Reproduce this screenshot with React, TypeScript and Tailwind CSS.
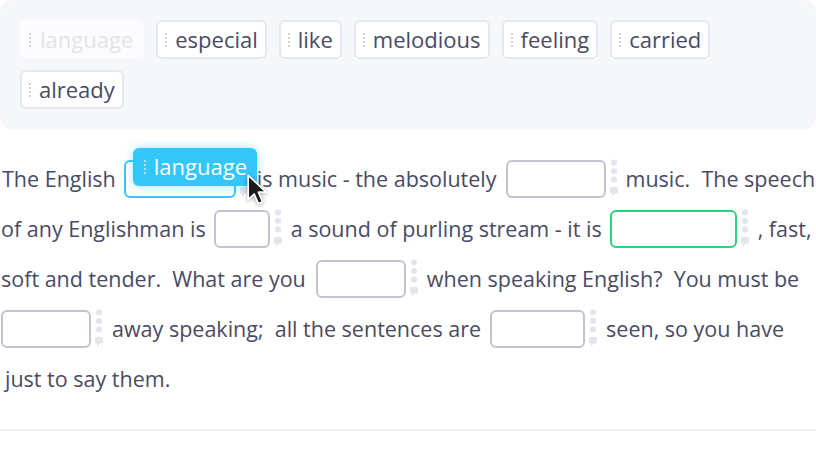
import React from 'react';

const font = { fontFamily: '"Open Sans", "Noto Sans", sans-serif' };

function Handle({ light = false }: { light?: boolean }) {
  return (
    <svg width="4" height="16" viewBox="0 0 4 16" className="shrink-0">
      {[2, 6, 10, 14].map((y) => (
        <circle key={y} cx="2" cy={y} r="1.1" fill={light ? '#ffffff' : '#c6c8d4'} opacity={light ? 0.7 : 1} />
      ))}
    </svg>
  );
}

function Hint() {
  return (
    <svg width="10" height="40" viewBox="0 0 10 40" className="shrink-0">
      <circle cx="5" cy="3.5" r="3" fill="#e3e4ec" />
      <circle cx="5" cy="12" r="3" fill="#e3e4ec" />
      <circle cx="5" cy="20.5" r="3" fill="#e3e4ec" />
      <rect x="1" y="28" width="8" height="6.5" rx="1.5" fill="#e3e4ec" />
      <polygon points="3,34 6,34 3,38" fill="#e3e4ec" />
    </svg>
  );
}

function Chip({ word, faded = false }: { word: string; faded?: boolean }) {
  if (faded) {
    return (
      <div className="flex items-center gap-[8px] h-[39px] pl-[6px] pr-[9px] rounded-md bg-[#fcfcfe] border-2 border-[#fcfcfe] text-[#e2e3eb]">
        <Handle />
        <span className="text-[22px] leading-none pb-[2px]">{word}</span>
      </div>
    );
  }
  return (
    <div className="flex items-center gap-[7px] h-[39px] pl-[6px] pr-[7px] rounded-md bg-white border-2 border-[#e6e8f0] text-[#4a4b63]">
      <Handle />
      <span className="text-[22px] leading-none pb-[2px]">{word}</span>
    </div>
  );
}

function Blank({ w, tone = 'gray' }: { w: number; tone?: 'gray' | 'green' | 'blue' }) {
  const border =
    tone === 'green' ? 'border-[#2bd27b]' : tone === 'blue' ? 'border-[#37c5f6]' : 'border-[#c3c2d4]';
  return (
    <div className="flex items-center gap-[3px]">
      <div className={`h-[38px] rounded-md bg-white border-2 ${border}`} style={{ width: w }} />
      <Hint />
    </div>
  );
}

function Cursor() {
  return (
    <svg width="28" height="36" viewBox="0 0 22 30" className="absolute left-[121px] top-[14px] z-20 drop-shadow-[0_1px_2px_rgba(0,0,0,0.35)]">
      <path d="M2 2 L2 22 L7 17.5 L10.5 25.5 L14 24 L10.5 16 L17 16 Z" fill="#1b1b1f" stroke="#ffffff" strokeWidth="1.4" strokeLinejoin="round" />
    </svg>
  );
}

export default function App() {
  return (
    <div className="w-[816px] h-[456px] bg-white overflow-hidden" style={font}>
      {/* word bank */}
      <div className="h-[129px] bg-[#f6f7fb] rounded-xl px-[20px] pt-[20px] flex flex-col gap-[11px]">
        <div className="flex gap-[12px]">
          <Chip word="language" faded />
          {['especial', 'like', 'melodious', 'feeling', 'carried'].map((w) => (
            <Chip key={w} word={w} />
          ))}
        </div>
        <div className="flex gap-[12px]">
          <Chip word="already" />
        </div>
      </div>

      {/* text with blanks */}
      <div className="pt-[25px] text-[21.5px] text-[#4a4b63] whitespace-pre">
        <div className="flex items-center h-[50px] pl-[2px]">
          <span>The English</span>
          <div className="relative ml-[8px]">
            <Blank w={112} tone="blue" />
            <div className="absolute left-[9px] top-[-11px] z-10 flex items-center gap-[7px] h-[38px] pl-[10px] pr-[10px] rounded-md bg-[#33c6f8] text-white text-[22px] shadow-[0_0_10px_rgba(51,198,248,0.45)]">
              <Handle light />
              <span className="leading-none pb-[2px]">language</span>
            </div>
            <Cursor />
          </div>
          <span className="ml-[8px]">is music - the absolutely</span>
          <div className="ml-[9px]"><Blank w={100} /></div>
          <span className="ml-[7px]">music.  The speech</span>
        </div>

        <div className="flex items-center h-[50px] pl-[1px]">
          <span>of any Englishman is</span>
          <div className="ml-[8px]"><Blank w={56} /></div>
          <span className="ml-[8px]">a sound of purling stream - it is</span>
          <div className="ml-[8px]"><Blank w={127} tone="green" /></div>
          <span className="ml-[8px]">, fast,</span>
        </div>

        <div className="flex items-center h-[50px] pl-[1px]">
          <span>soft and tender.  What are you</span>
          <div className="ml-[10px]"><Blank w={90} /></div>
          <span className="ml-[8px]">when speaking English?  You must be</span>
        </div>

        <div className="flex items-center h-[50px] pl-[1px]">
          <Blank w={90} />
          <span className="ml-[8px]">away speaking;  all the sentences are</span>
          <div className="ml-[9px]"><Blank w={95} /></div>
          <span className="ml-[8px]">seen, so you have</span>
        </div>

        <div className="flex items-center h-[50px] pl-[5px]">
          <span>just to say them.</span>
        </div>
      </div>

      <div className="mt-[25px] border-t-2 border-[#f0f1f6]" />
    </div>
  );
}
